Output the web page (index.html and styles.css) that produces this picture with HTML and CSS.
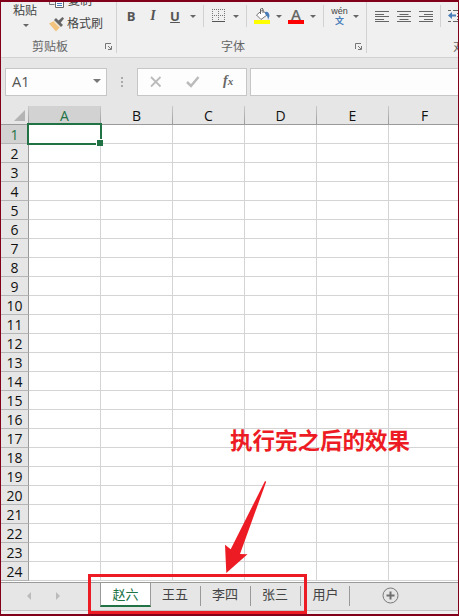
FILE: index.html
```html
<!DOCTYPE html>
<html lang="zh-CN">
<head>
<meta charset="utf-8">
<title>工作簿</title>
<link rel="stylesheet" href="styles.css">
</head>
<body>
<main class="window">
  <header class="ribbon">
    <section class="group clipboard">
      <div class="tools">
        <div class="paste"><span>粘贴</span><i class="caret"></i></div>
        <div class="clip-actions">
          <div class="action copy">
            <svg width="16" height="16" viewBox="0 0 16 16"><path d="M5.500 11.500H.5V1.500H8" fill="none" stroke="#777"/><path d="M6.500 3.500h8v11h-8z" fill="#fff" stroke="#666"/><path d="M8 10.500h5M8 12.500h5" stroke="#4a7ebb"/></svg>
            <span>复制</span>
          </div>
          <div class="action painter">
            <svg width="16" height="16" viewBox="0 0 16 16"><path d="M0 7.500L5 5l6 6-4 4.500z" fill="#f2c47e"/><path d="M5 4l2-2 7 7-2 2z" fill="#666"/><path d="M9 5l4.500-4L15 2.500 11.500 7z" fill="#666"/><path d="M5 5.500l5.500 5.500" stroke="#f0f0f0"/></svg>
            <span>格式刷</span>
          </div>
        </div>
      </div>
      <footer class="label"><span>剪贴板</span><svg class="launcher" width="8" height="8" viewBox="0 0 8 8"><path d="M.5 6V.5H6M3 3l3 3M6.500 3v3.500H3" fill="none" stroke="#777"/></svg></footer>
    </section>
    <section class="group font">
      <div class="tools">
        <b class="fmt bold">B</b><i class="fmt italic">I</i><u class="fmt under">U</u><i class="caret"></i>
        <i class="divider d1"></i>
        <svg class="borders" width="14" height="14" viewBox="0 0 14 14"><path d="M.5 0v12M6.500 0v12M12.500 0v12M0 .5h13M0 6.500h13" stroke="#777" stroke-dasharray="1 1"/><path d="M0 12.500h13" stroke="#555"/></svg>
        <i class="caret"></i>
        <i class="divider d2"></i>
        <svg class="fill" width="17" height="17" viewBox="0 0 17 17"><path d="M0 12h16v4H0z" fill="#ff0"/><path d="M2.500 7l6-5 4.500 5-6 4.500z" fill="#fff" stroke="#777"/><path d="M6.500 6V1q1.500-2 2.500 0v4" fill="none" stroke="#666"/><path d="M11 4q4-1 4.500 4L14 12q0-4-3-6z" fill="#4a7ebb"/></svg>
        <i class="caret"></i>
        <span class="color">A</span>
        <i class="caret"></i>
        <i class="divider d3"></i>
        <span class="phonetic"><span>wén</span><b>文</b></span>
        <i class="caret"></i>
      </div>
      <footer class="label"><span>字体</span><svg class="launcher" width="8" height="8" viewBox="0 0 8 8"><path d="M.5 6V.5H6M3 3l3 3M6.500 3v3.500H3" fill="none" stroke="#777"/></svg></footer>
    </section>
    <section class="group align">
      <div class="tools">
        <svg width="14" height="12" viewBox="0 0 14 12"><path d="M0 .5h14M0 3.500h9M0 5.500h14M0 8.500h9M0 10.500h14" stroke="#666"/></svg>
        <svg width="14" height="12" viewBox="0 0 14 12"><path d="M0 .5h14M2.500 3.500h9M0 5.500h14M2.500 8.500h9M0 10.500h14" stroke="#666"/></svg>
        <svg width="14" height="12" viewBox="0 0 14 12"><path d="M0 .5h14M5 3.500h9M0 5.500h14M5 8.500h9M0 10.500h14" stroke="#666"/></svg>
        <i class="divider d4"></i>
        <svg class="indent" width="14" height="14" viewBox="0 0 14 14"><path d="M0 1.500h3M5 1.500h9M9 4.500h5M9 7.500h5M9 10.500h5M0 12.500h3M5 12.500h9" stroke="#666"/><path d="M0 6.500L4 3v2.500h4v2H4V10z" fill="#4a7ebb"/></svg>
      </div>
      <footer class="label"><span>对齐方式</span></footer>
    </section>
  </header>

  <section class="formula-bar">
    <div class="name-box"><span>A1</span><i class="name-caret"></i></div>
    <i class="grip"></i>
    <div class="entry-tools">
      <svg width="12" height="12" viewBox="0 0 12 12"><path d="M1 1l9.500 9.500M10.500 1L1 10.500" stroke="#bbb" stroke-width="1.800"/></svg>
      <svg width="14" height="12" viewBox="0 0 14 12"><path d="M1 6l4 4 7.500-9" fill="none" stroke="#bbb" stroke-width="2.500"/></svg>
      <span class="fx">f<small>x</small></span>
    </div>
    <div class="formula"></div>
  </section>

  <section class="sheet" id="sheet"></section>

  <nav class="tabs">
    <i class="nav prev"></i><i class="nav next"></i>
    <span class="tab active">赵六</span><span class="tab">王五</span><span class="tab">李四</span><span class="tab">张三</span><span class="tab last">用户</span>
    <svg class="add" width="17" height="17" viewBox="0 0 17 17"><circle cx="8.500" cy="8.500" r="7.500" fill="none" stroke="#777"/><path d="M8.500 4.500v8M4.500 8.500h8" stroke="#707070" stroke-width="2"/></svg>
  </nav>

  <div class="note">执行完之后的效果</div>
  <svg class="pointer" width="44" height="94" viewBox="0 0 44 94"><path d="M41 1l1.200.700L16 74l7.500.300L2.300 93 1 64.700l5.700 4.600z" fill="#ed1c24"/></svg>
  <div class="highlight"></div>
</main>
<script src="sheet.js"></script>
</body>
</html>
```
FILE: styles.css
```css
* { box-sizing: border-box; }
body { margin: 0; font-family: "Open Sans", "Noto Sans CJK SC", sans-serif; }
i { font-style: normal; }
svg { display: block; flex: none; }
.window {
  position: relative; width: 459px; height: 616px; overflow: hidden;
  display: flex; flex-direction: column;
  border: solid #82001a; border-width: 2px 1px; background: #f0f0f0;
}

/* Ribbon */
.ribbon { display: flex; flex: none; height: 56px; background: #f0f0f0; border-bottom: 1px solid #d2d2d2; overflow: hidden; font-size: 12px; color: #444; }
.group { position: relative; flex: none; display: flex; flex-direction: column; height: 51px; border-right: 1px solid #d2d2d2; }
.clipboard { width: 116px; }
.font { width: 250px; }
.align { width: 120px; }
.tools { display: flex; height: 36px; align-items: flex-start; }
.label { display: flex; height: 18px; line-height: 18px; color: #666; align-items: flex-start; }
.clipboard .label { padding-left: 31px; }
.font .label { padding-left: 104px; }
.align .label { padding-left: 86px; white-space: nowrap; }
.label span { position: relative; top: 3px; }
.launcher { margin-top: 8px; }
.clipboard .launcher { margin-left: 37px; }
.font .launcher { margin-left: 110px; }
.caret { flex: none; width: 6px; height: 3px; margin: 13px -1px 0 0; background: #666; clip-path: polygon(0 0, 100% 0, 50% 100%); }
.paste { display: flex; flex-direction: column; align-items: center; width: 24px; margin-left: 12px; line-height: 18px; }
.paste .caret { margin: 4px 0 0 2px; }
.clip-actions { margin: -10px 0 0 12px; }
.action { display: flex; align-items: center; height: 22px; line-height: 18px; gap: 2px; white-space: nowrap; }
.copy { margin-top: -2px; gap: 3px; }
.painter { margin-top: 1px; }
.fmt { flex: none; width: 10px; margin-top: 5px; font-size: 13px; line-height: 18px; text-align: center; font-weight: 700; color: #555; }
.bold { margin-left: 9px; }
.italic { margin-left: 12px; font: italic 700 14px/18px "Liberation Serif", serif; }
.under { margin-left: 12px; }
.under + .caret { margin-left: 10px; }
.divider { flex: none; width: 1px; height: 22px; margin-top: 3px; background: #d2d2d2; }
.d1 { margin-left: 8px; }
.borders { margin: 7px 7px 0 8px; }
.d2 { margin-left: 8px; }
.fill { margin: 6px 5px 0 7px; }
.color { flex: none; width: 16px; height: 16px; margin: 6px 6px 0 7px; border-bottom: 4px solid #f00; font-size: 15px; line-height: 13px; font-weight: 600; text-align: center; color: #666; }
.d3 { margin-left: 8px; }
.phonetic { display: flex; flex-direction: column; align-items: center; width: 17px; margin: 4px 5px 0 7px; font: 9px/10px "Liberation Sans", sans-serif; }
.phonetic b { font: 700 9px/10px "Noto Sans CJK SC", sans-serif; color: #4a7ebb; }
.align .tools { padding-left: 8px; }
.align .tools > svg { margin: 9px 8px 0 0; }
.align .divider { margin-right: 7px; margin-left: -1px; }
.align .tools > .indent { margin-top: 7px; }

/* Formula bar */
.formula-bar { display: flex; flex: none; height: 48px; padding: 10px 0 10px 4px; background: #e6e6e6; }
.name-box, .entry-tools, .formula { display: flex; align-items: center; height: 28px; border: 1px solid #c6c6c6; background: #fdfdfd; }
.name-box { width: 102px; justify-content: space-between; padding: 0 5px 2px 6px; font-size: 14.5px; color: #555; }
.name-caret { width: 8px; height: 4px; background: #777; clip-path: polygon(0 0, 100% 0, 50% 100%); }
.grip { width: 2px; height: 10px; margin: 9px 14px 0; background: repeating-linear-gradient(#aaa 0 2px, transparent 2px 4px); }
.entry-tools { width: 110px; padding-left: 12px; }
.entry-tools svg + svg { margin-left: 24px; }
.fx { margin: -2px 0 0 23px; font: italic 700 14px/20px "Liberation Serif", serif; color: #666; }
.fx small { font-size: 11px; }
.formula { flex: 1; margin-left: 3px; border-right: 0; }

/* Grid */
.sheet { flex: none; height: 476px; overflow: hidden; background: #fff; }
.row { display: grid; grid-template-columns: 28px repeat(6, 72px); grid-template-rows: 19px; height: 19px; }
.row > div { border-right: 1px solid #d4d4d4; border-bottom: 1px solid #d4d4d4; }
.row > .num { border-right-color: #999; border-bottom-color: #b5b5b5; background: #e6e6e6; font-size: 14px; line-height: 20px; text-align: center; color: #111; }
.row > .num.selected { background: #d2d2d2; color: #217346; }
.heads > div { border-right: 1px solid; border-bottom: 1px solid #999; border-image: linear-gradient(#ccc, #999) 1; background: #e6e6e6; font-size: 14px; line-height: 20px; text-align: center; color: #111; }
.heads > .selected { background: #d2d2d2; color: #217346; }
.heads > .corner { display: flex; justify-content: flex-end; align-items: flex-end; padding: 0 3px 3px 0; }
.corner::after { content: ""; width: 11px; height: 11px; background: #b4b4b4; clip-path: polygon(100% 0, 100% 100%, 0 100%); }
.cursor { position: relative; }
.cursor::before { content: ""; position: absolute; inset: -2px; border: 2px solid #217346; z-index: 1; }
.cursor::after { content: ""; position: absolute; right: -3px; bottom: -3px; width: 6px; height: 6px; background: #217346; border: solid #fff; border-width: 1px 0 0 1px; z-index: 2; }

/* Sheet tabs */
.tabs { display: flex; flex: none; height: 29px; border-top: 1px solid #999; border-bottom: 1px solid #c6c6c6; background: #e6e6e6; }
.nav { width: 4px; height: 8px; margin-top: 9px; background: #bbb; }
.prev { margin-left: 26px; clip-path: polygon(100% 0, 100% 100%, 0 50%); }
.next { margin: 9px 40px 0 25px; clip-path: polygon(0 0, 100% 50%, 0 100%); }
.tab { position: relative; flex: none; width: 50px; height: 24px; padding-right: 2px; text-align: center; font-size: 13px; line-height: 23px; color: #444; }
.tab:not(.active)::after { content: ""; position: absolute; right: 0; top: 3px; width: 1px; height: 20px; background: #999; }
.tab.active { width: 51px; padding: 0; border: 1px solid #999; border-top: 0; border-bottom: 2px solid #217346; background: #fff; color: #217346; }
.tab.last { width: 49px; padding: 0; }
.add { margin: 4px 0 0 32px; }

/* Annotations over the sheet */
.note { position: absolute; left: 229px; top: 421px; font: 700 22.5px/32px "Noto Sans CJK SC", sans-serif; color: #ed1c24; white-space: nowrap; }
.pointer { position: absolute; left: 223px; top: 478px; }
.highlight { position: absolute; left: 87px; top: 572px; width: 219px; height: 40px; border: 3px solid #ed1c24; }
```
FILE: sheet.js
```javascript
const sheet = document.getElementById("sheet");
const columns = ["A", "B", "C", "D", "E", "F"];

function addRow(className, cells) {
  const row = document.createElement("div");
  row.className = className;
  for (const [name, text] of cells) {
    const cell = document.createElement("div");
    cell.className = name;
    cell.textContent = text;
    row.append(cell);
  }
  sheet.append(row);
}

addRow("row heads", [["corner", ""], ...columns.map((c, i) => [i === 0 ? "selected" : "", c])]);
for (let n = 1; n <= 24; n++) {
  addRow("row", [
    [n === 1 ? "num selected" : "num", n],
    ...columns.map((c, i) => [n === 1 && i === 0 ? "cursor" : "", ""]),
  ]);
}
```
